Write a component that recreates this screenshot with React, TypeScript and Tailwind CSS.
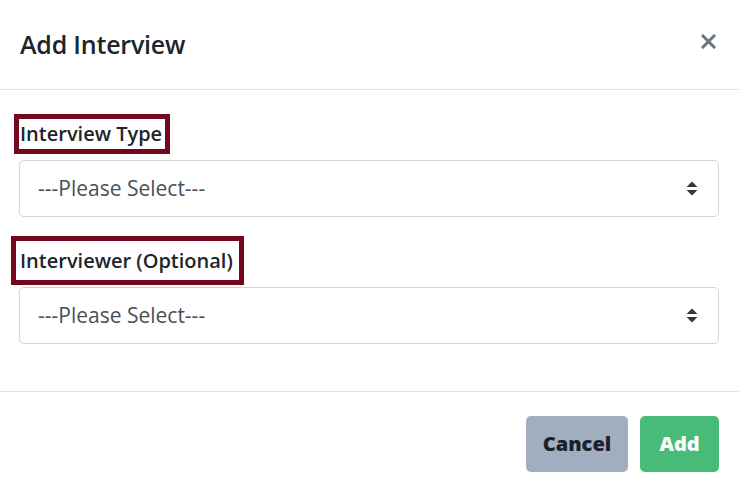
const fields = [
  { label: "Interview Type", box: "ml-[-5px] pl-[1px] pr-[3px] h-[40px] mt-[24px] mb-[6px]" },
  { label: "Interviewer (Optional)", box: "ml-[-8px] pl-[4px] pr-[6px] h-[49px] mt-[19px] mb-[2px]" },
];

function SelectArrows() {
  return (
    <svg width="12" height="15" viewBox="0 0 12 15" className="text-[#343a40]">
      <path d="M6 0.5 L11.5 6 H0.5 Z" fill="currentColor" />
      <path d="M6 14.5 L11.5 9 H0.5 Z" fill="currentColor" />
    </svg>
  );
}

export default function App() {
  return (
    <div className="w-[739px] h-[492px] bg-white overflow-hidden" style={{ fontFamily: "'Open Sans', 'Noto Sans', sans-serif" }}>
      <div className="h-[90px] px-5 flex items-center justify-between border-b border-[#dee2e6]">
        <h2 className="text-[25px] text-[#212529] font-semibold tracking-[-0.2px]">Add Interview</h2>
        <button className="mr-[3px] mb-[6px] text-[#6c757d]">
          <svg width="15" height="15" viewBox="0 0 15 15">
            <path d="M2 2 L13 13 M13 2 L2 13" stroke="currentColor" strokeWidth="3" strokeLinecap="square" />
          </svg>
        </button>
      </div>
      <div className="px-[19px] pb-[47px]">
        {fields.map((f) => (
          <div key={f.label}>
            <div className={`inline-flex items-center border-[5px] border-[#76061b] ${f.box}`}>
              <label className="text-[20px] font-semibold text-[#212529]">{f.label}</label>
            </div>
            <div className="h-[57px] mr-[1px] border border-[#ced4da] rounded-[5px] flex items-center justify-between pl-[18px] pr-[20px]">
              <span className="text-[21px] text-[#495057]">---Please Select---</span>
              <SelectArrows />
            </div>
          </div>
        ))}
      </div>
      <div className="border-t border-[#dee2e6] flex justify-end gap-3 pt-[24px] pr-[20px]">
        <button className="w-[102px] h-[56px] rounded-[5px] bg-[#a0aec0] text-[#1a202c] text-[20px] font-extrabold">Cancel</button>
        <button className="w-[79px] h-[56px] rounded-[5px] bg-[#48bb78] text-white text-[20px] font-extrabold">Add</button>
      </div>
    </div>
  );
}
